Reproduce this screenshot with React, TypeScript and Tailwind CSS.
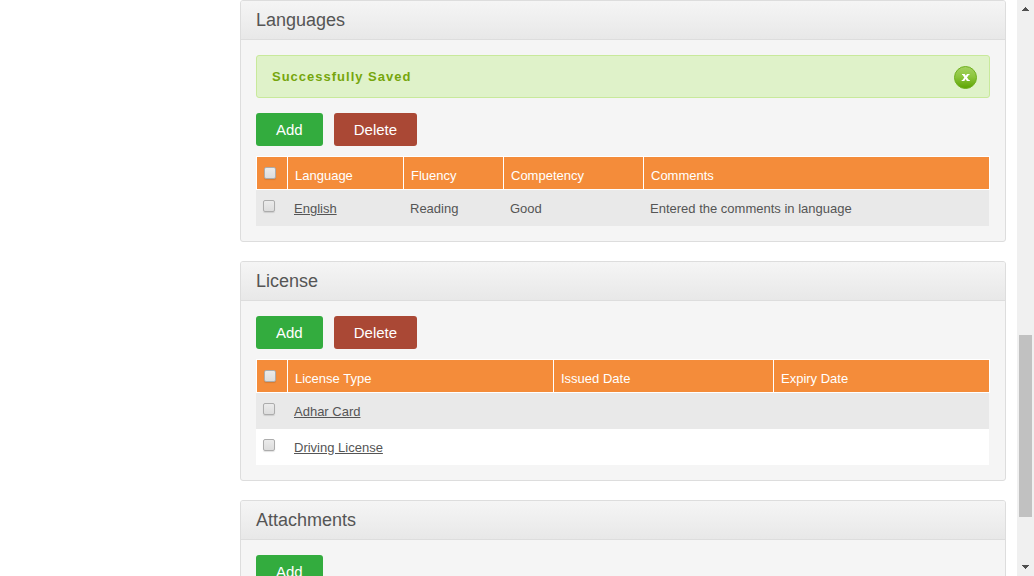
import type { ReactNode } from 'react';

function Check({ label }: { label: string }) {
  return (
    <input
      type="checkbox"
      aria-label={label}
      className="block size-3 appearance-none rounded-xs border border-[#acacac] bg-linear-to-b from-[#ebebeb] to-[#dddddd] shadow-[0_1px_1px_rgba(0,0,0,0.12)] checked:bg-[#777777]"
    />
  );
}

function AddButton() {
  return (
    <button type="button" className="h-[33px] rounded-[3px] bg-[#33ac3e] px-5 pt-[2px] text-[15px] text-white">
      Add
    </button>
  );
}

function DeleteButton() {
  return (
    <button type="button" className="h-[33px] rounded-[3px] bg-[#aa4835] px-5 pt-[2px] text-[15px] text-white">
      Delete
    </button>
  );
}

function Panel({ title, children }: { title: string; children: ReactNode }) {
  return (
    <section className="rounded-[3px] border border-[#dddddd] bg-[#f5f5f5]">
      <h2 className="h-[39px] rounded-t-[2px] border-b border-[#dddddd] bg-linear-to-b from-[#f5f5f5] to-[#e8e8e8] px-[15px] text-lg leading-[38px]">
        {title}
      </h2>
      <div className="p-[15px]">{children}</div>
    </section>
  );
}

function Notice({ text }: { text: string }) {
  return (
    <div
      role="status"
      className="mb-[15px] flex h-[43px] items-center justify-between rounded-[3px] border border-[#c8e99b] bg-[#dff2c9] pr-[11px] pl-[15px]"
    >
      <p className="text-[13px] font-bold tracking-[1px] text-[#76a60c]">{text}</p>
      <button type="button" aria-label="Close" className="size-6 rounded-full">
        <svg viewBox="0 0 24 24" className="size-6" aria-hidden="true">
          <defs>
            <linearGradient id="close-fill" x1="0" y1="0" x2="0" y2="1">
              <stop offset="0" stopColor="#a4d162" />
              <stop offset="0.45" stopColor="#8dc63f" />
              <stop offset="1" stopColor="#5ca300" />
            </linearGradient>
          </defs>
          <circle cx="11.5" cy="12.5" r="11" fill="url(#close-fill)" stroke="#70b020" />
          <path
            d="M8 9h2.7l1.1 1.8L13 9h2.5v1h-.8L13 12.4l1.9 2.6h.9v1h-2.9l-1.3-2-1.3 2H7.7v-1h.8l1.8-2.6L8.7 10H8z"
            fill="#ffffff"
          />
        </svg>
      </button>
    </div>
  );
}

type Column = { name: string; width: string };

function DataTable({ caption, columns, rows }: { caption: string; columns: Column[]; rows: string[][] }) {
  return (
    <table
      aria-label={caption}
      className="mt-[10px] w-full table-fixed border-separate border-spacing-0 text-left text-[13px] leading-5"
    >
      <thead>
        <tr className="h-[34px] bg-[#f48c3a] text-white">
          <th className="w-8 border border-white p-0 pl-[7px] align-middle">
            <Check label={`Select all in ${caption}`} />
          </th>
          {columns.map((c) => (
            <th key={c.name} className={`${c.width} border-y border-r border-white pt-[6px] pl-[7px] font-normal`}>
              {c.name}
            </th>
          ))}
        </tr>
      </thead>
      <tbody>
        {rows.map((row) => (
          <tr key={row[0]} className="h-9 odd:bg-[#e9e9e9] even:bg-white">
            <td className="p-0 pt-[10px] pl-[7px] align-top">
              <Check label={`Select ${row[0]}`} />
            </td>
            {row.map((cell, i) => (
              <td key={columns[i].name} className="pt-[2px] pl-[6px] last:border-r last:border-[#f5f5f5]">
                {i === 0 ? (
                  <a href="#" className="underline">
                    {cell}
                  </a>
                ) : (
                  cell
                )}
              </td>
            ))}
          </tr>
        ))}
      </tbody>
    </table>
  );
}

function ScrollBar() {
  return (
    <div aria-hidden="true" className="flex w-[17px] shrink-0 flex-col bg-[#f0f0f0]">
      <div className="flex h-[17px] justify-center pt-[7px]">
        <svg width="7" height="4" viewBox="0 0 7 4" shapeRendering="crispEdges" fill="#505050">
          <path d="M3 0h1v1h1v1h1v1h1v1H0V3h1V2h1V1h1z" />
        </svg>
      </div>
      <div className="flex flex-1 flex-col px-[2px]">
        <div className="flex-[318]" />
        <div className="flex-[182] bg-[#c1c1c1]" />
        <div className="flex-[42]" />
      </div>
      <div className="flex h-[17px] justify-center pt-[6px]">
        <svg width="7" height="4" viewBox="0 0 7 4" shapeRendering="crispEdges" fill="#505050">
          <path d="M0 0h7v1H6v1H5v1H4v1H3V3H2V2H1V1H0z" />
        </svg>
      </div>
    </div>
  );
}

const languageColumns: Column[] = [
  { name: 'Language', width: 'w-[116px]' },
  { name: 'Fluency', width: 'w-[100px]' },
  { name: 'Competency', width: 'w-[140px]' },
  { name: 'Comments', width: 'w-auto' },
];

const licenseColumns: Column[] = [
  { name: 'License Type', width: 'w-[266px]' },
  { name: 'Issued Date', width: 'w-[220px]' },
  { name: 'Expiry Date', width: 'w-auto' },
];

export default function App() {
  return (
    <div className="flex h-screen overflow-hidden bg-white font-['Liberation_Sans',Arial,sans-serif] text-[#555555]">
      <main className="ml-60 flex min-w-0 flex-1 flex-col gap-[19px] overflow-hidden pr-[11px] *:shrink-0">
        <Panel title="Languages">
          <Notice text="Successfully Saved" />
          <div className="flex gap-[11px]">
            <AddButton />
            <DeleteButton />
          </div>
          <DataTable
            caption="Languages"
            columns={languageColumns}
            rows={[['English', 'Reading', 'Good', 'Entered the comments in language']]}
          />
        </Panel>
        <Panel title="License">
          <div className="flex gap-[11px]">
            <AddButton />
            <DeleteButton />
          </div>
          <DataTable
            caption="License"
            columns={licenseColumns}
            rows={[
              ['Adhar Card', '', ''],
              ['Driving License', '', ''],
            ]}
          />
        </Panel>
        <Panel title="Attachments">
          <AddButton />
        </Panel>
      </main>
      <ScrollBar />
    </div>
  );
}
